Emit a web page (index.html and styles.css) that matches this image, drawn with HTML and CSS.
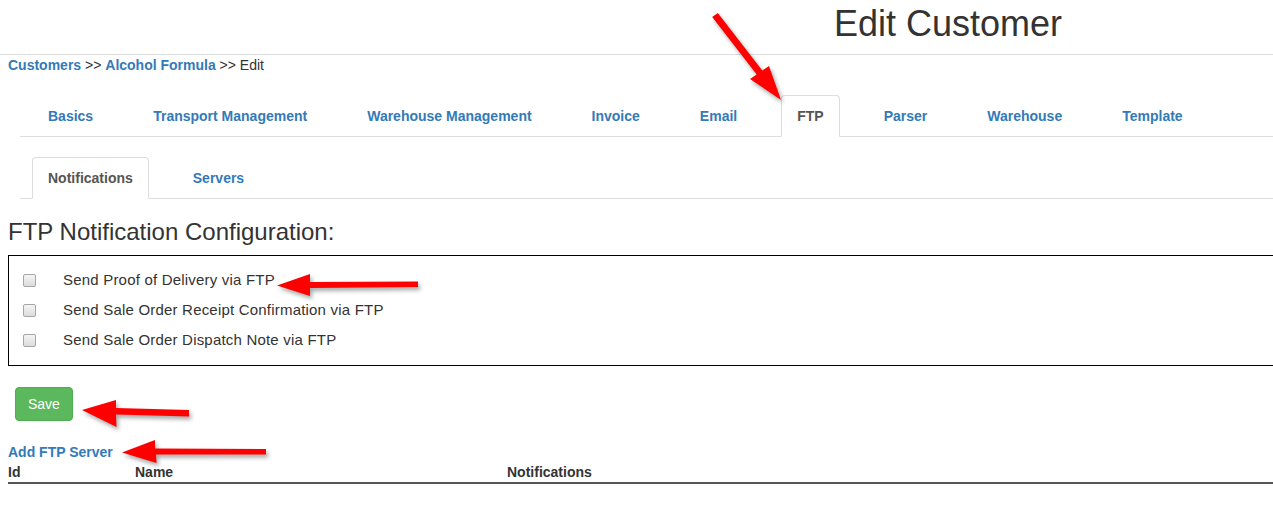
FILE: index.html
```html
<!DOCTYPE html>
<html lang="en">
<head>
  <meta charset="UTF-8">
  <meta name="viewport" content="width=device-width, initial-scale=1.0">
  <title>Edit Customer</title>
  <link rel="stylesheet" href="styles.css">
</head>
<body>

  <div class="page-header">
    <h1>Edit Customer</h1>
  </div>

  <div class="content">
    <div class="breadcrumb">
      <a href="#">Customers</a> &gt;&gt; <a href="#">Alcohol Formula</a> &gt;&gt; Edit
    </div>

    <ul class="nav-tabs">
      <li><a href="#">Basics</a></li>
      <li><a href="#">Transport Management</a></li>
      <li><a href="#">Warehouse Management</a></li>
      <li><a href="#">Invoice</a></li>
      <li><a href="#">Email</a></li>
      <li class="active"><a href="#">FTP</a></li>
      <li><a href="#">Parser</a></li>
      <li><a href="#">Warehouse</a></li>
      <li><a href="#">Template</a></li>
    </ul>

    <ul class="nav-tabs">
      <li class="active"><a href="#">Notifications</a></li>
      <li><a href="#">Servers</a></li>
    </ul>

    <h3>FTP Notification Configuration:</h3>
    <div class="notify-box">
      <label class="check-row"><input type="checkbox">Send Proof of Delivery via FTP</label>
      <label class="check-row"><input type="checkbox">Send Sale Order Receipt Confirmation via FTP</label>
      <label class="check-row"><input type="checkbox">Send Sale Order Dispatch Note via FTP</label>
    </div>

    <button class="btn-save">Save</button>

    <a href="#" class="add-link">Add FTP Server</a>
    <table class="servers">
      <thead>
        <tr>
          <th class="col-id">Id</th>
          <th class="col-name">Name</th>
          <th>Notifications</th>
        </tr>
      </thead>
    </table>
  </div>

  <!-- red annotation arrows drawn over the screenshot -->
  <svg class="annotations" width="1273" height="531" viewBox="0 0 1273 531">
    <polygon points="717.8,12.9 762.3,70.4 769,66 781,100 750,79 756.7,74.6 712.2,17.1" />
    <polygon points="418,281.5 418,287 310,288 310,296 277,285.5 310,274 310,282" />
    <polygon points="189,410 189,416.5 116,414.5 116.5,427 82,410 116,400 116,408" />
    <polygon points="266,449 266,454.5 156,454.5 156.5,463 122,452.5 155,440 155,448.5" />
  </svg>
</body>
</html>
```

FILE: styles.css
```css
body {
  font-family: "Liberation Sans", Arial, sans-serif;
  font-size: 14px;
  line-height: 20px;
  color: #333;
  margin: 0;
  padding: 0;
  overflow: hidden;
}

a {
  color: #337ab7;
  text-decoration: none;
}

.page-header {
  padding: 4px 0 10px 834px;
  border-bottom: 1px solid #ddd;
}

.page-header h1 {
  margin: 0;
  font-size: 36px;
  font-weight: normal;
  line-height: 40px;
}

.content {
  padding-left: 8px;
}

.breadcrumb a {
  font-weight: bold;
}

.nav-tabs {
  list-style: none;
  display: flex;
  margin: 20px 0 0 12px;
  padding: 0 0 0 12px;
  border-bottom: 1px solid #ddd;
}

.nav-tabs li {
  margin-right: 28px;
  margin-bottom: -1px;
}

.nav-tabs a {
  display: block;
  padding: 10px 15px;
  border: 1px solid transparent;
  border-radius: 4px 4px 0 0;
  font-weight: bold;
  line-height: 20px;
}

.nav-tabs .active a {
  color: #555;
  background: #fff;
  border-color: #ddd;
  border-bottom-color: transparent;
}

h3 {
  font-size: 24px;
  font-weight: normal;
  line-height: 26px;
  margin: 20px 0 10px;
}

.notify-box {
  border: 1px solid #000;
  margin-right: -1px; /* right edge runs past the window */
  padding: 9px 0 10px;
}

.check-row {
  display: flex;
  align-items: center;
  height: 30px;
  font-size: 15px;
  letter-spacing: 0.2px;
}

.check-row input {
  appearance: none;
  -webkit-appearance: none;
  width: 13px;
  height: 13px;
  margin: 0 27px 0 14px;
  border: 1px solid #a6a6a6;
  border-radius: 2px;
  background: linear-gradient(#f4f4f4, #dcdcdc);
}

.btn-save {
  display: block;
  margin: 21px 0 0 7px;
  padding: 6px 12px;
  font-family: inherit;
  font-size: 14px;
  line-height: 20px;
  color: #fff;
  background-color: #5cb85c;
  border: 1px solid #4cae4c;
  border-radius: 4px;
}

.add-link {
  display: block;
  margin-top: 21px;
  font-weight: bold;
}

.servers {
  width: 100%;
  border-collapse: collapse;
}

.servers th {
  text-align: left;
  padding: 0;
  line-height: 20px;
  border-bottom: 2px solid #555;
}

.col-id {
  width: 127px;
}

.col-name {
  width: 372px;
}

.annotations {
  position: absolute;
  top: 0;
  left: 0;
  pointer-events: none;
}

.annotations polygon {
  fill: #ff0000;
  filter: drop-shadow(2px 3px 2px rgba(0, 0, 0, 0.35));
}
```
